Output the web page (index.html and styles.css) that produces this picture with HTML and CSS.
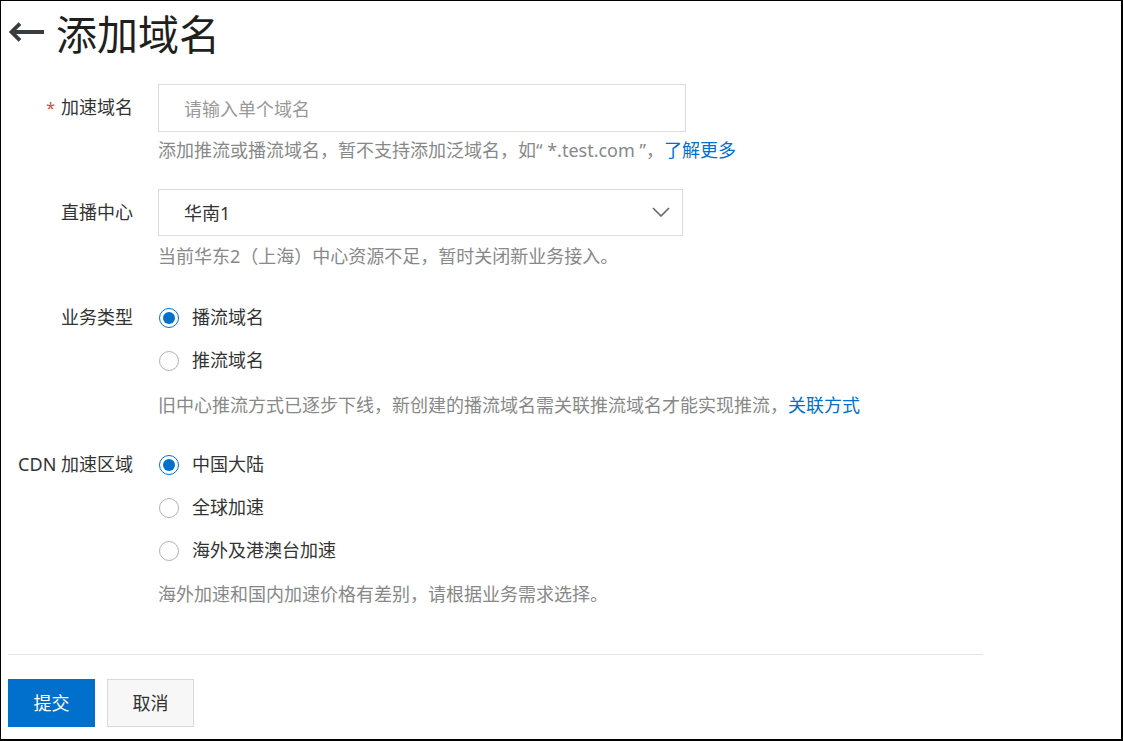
FILE: index.html
```html
<!DOCTYPE html>
<html lang="zh-CN">
<head>
<meta charset="utf-8">
<title>添加域名</title>
<link rel="stylesheet" href="styles.css">
</head>
<body>
<div class="page">
  <header class="header">
    <svg class="back" width="37" height="20" viewBox="0 0 37 20" aria-hidden="true">
      <path d="M36 10H3.5 M12 1.6L3.5 10L12 18.4" fill="none" stroke="#373d41" stroke-width="3.8"/>
    </svg>
    <h1 class="title">添加域名</h1>
  </header>

  <div class="item item-input">
    <div class="label"><span class="star">*</span>加速域名</div>
    <div class="control">
      <div class="input"><span class="placeholder">请输入单个域名</span></div>
      <div class="help help-a">添加推流或播流域名，暂不支持添加泛域名，如“ *.test.com ”，<span class="link">了解更多</span></div>
    </div>
  </div>

  <div class="item item-select">
    <div class="label">直播中心</div>
    <div class="control">
      <div class="select">
        <span class="value">华南1</span>
        <svg class="chev" width="18" height="10" viewBox="0 0 18 10" aria-hidden="true">
          <path d="M1 1L9 9L17 1" fill="none" stroke="#666" stroke-width="1.6"/>
        </svg>
      </div>
      <div class="help help-b">当前华东2（上海）中心资源不足，暂时关闭新业务接入。</div>
    </div>
  </div>

  <div class="item item-radio">
    <div class="label label-radio">业务类型</div>
    <div class="control">
      <div class="radio-row"><span class="radio checked"></span><span class="radio-text">播流域名</span></div>
      <div class="radio-row"><span class="radio"></span><span class="radio-text">推流域名</span></div>
      <div class="help help-c">旧中心推流方式已逐步下线，新创建的播流域名需关联推流域名才能实现推流，<span class="link">关联方式</span></div>
    </div>
  </div>

  <div class="item item-radio last">
    <div class="label label-radio">CDN 加速区域</div>
    <div class="control">
      <div class="radio-row"><span class="radio checked"></span><span class="radio-text">中国大陆</span></div>
      <div class="radio-row"><span class="radio"></span><span class="radio-text">全球加速</span></div>
      <div class="radio-row"><span class="radio"></span><span class="radio-text">海外及港澳台加速</span></div>
      <div class="help help-d">海外加速和国内加速价格有差别，请根据业务需求选择。</div>
    </div>
  </div>

  <div class="divider"></div>

  <div class="actions">
    <button class="btn btn-primary">提交</button>
    <button class="btn btn-default">取消</button>
  </div>
</div>
</body>
</html>
```

FILE: styles.css
```css
* { box-sizing: border-box; }

html, body {
  margin: 0;
  padding: 0;
  background: #fff;
}

body {
  font-family: "Noto Sans", "Noto Sans CJK SC", sans-serif;
  color: #333;
}

.page {
  width: 1123px;
  height: 741px;
  border-style: solid;
  border-color: #000;
  border-width: 1px 2px 2px 1px;
  padding-left: 7px;
  overflow: hidden;
}

.header {
  height: 61px;
  display: flex;
  align-items: center;
  gap: 11px;
}

.back {
  display: block;
  flex: none;
}

.title {
  margin: 0;
  font-size: 41px;
  font-weight: 400;
  line-height: 50px;
  color: #1f1f1f;
  font-family: "Noto Sans CJK SC", sans-serif;
}

.item {
  display: grid;
  grid-template-columns: 125px 1fr;
  column-gap: 25px;
  margin-bottom: 27px;
}

.item-input { margin-top: 22px; }
.item-select { margin-bottom: 28px; }
.item-radio { margin-bottom: 26px; }
.item-radio.last { margin-bottom: 0; }

.label {
  text-align: right;
  font-size: 18px;
  line-height: 47px;
  color: #333;
  white-space: nowrap;
}

.label-radio { line-height: 42px; }

.star {
  color: #e2453c;
  font-size: 16px;
  margin-right: 6px;
}

.control {
  display: flex;
  flex-direction: column;
  align-items: flex-start;
}

.input {
  width: 528px;
  height: 48px;
  border: 1px solid #dcdcdc;
  padding-left: 25px;
  padding-bottom: 1px;
  display: flex;
  align-items: center;
  font-size: 18px;
}

.placeholder { color: #999; }

.select {
  width: 525px;
  height: 47px;
  border: 1px solid #dcdcdc;
  padding: 0 12px 1px 25px;
  display: flex;
  align-items: center;
  justify-content: space-between;
  font-size: 18px;
  color: #333;
}

.chev { display: block; }

.help {
  font-size: 18px;
  line-height: 24px;
  color: #888;
  white-space: nowrap;
}

.help-a { margin-top: 6px; }
.help-b { margin-top: 8px; }
.help-c { margin-top: 11px; }
.help-d { margin-top: 10px; }

.link { color: #0070cc; }

.radio-row {
  height: 43px;
  display: flex;
  align-items: center;
}

.radio {
  width: 20px;
  height: 20px;
  margin-left: 1px;
  border: 1px solid #b3b3b3;
  border-radius: 50%;
  background: #fff;
  position: relative;
  flex: none;
}

.radio.checked {
  border-color: #0070cc;
}

.radio.checked::after {
  content: "";
  position: absolute;
  left: 3px;
  top: 3px;
  width: 12px;
  height: 12px;
  border-radius: 50%;
  background: #0070cc;
}

.radio-text {
  margin-left: 13px;
  font-size: 18px;
  line-height: 24px;
  color: #333;
  position: relative;
  top: -1px;
}

.divider {
  width: 975px;
  height: 1px;
  background: #e3e3e3;
  margin-top: 48px;
}

.actions {
  margin-top: 24px;
  display: flex;
  gap: 12px;
}

.btn {
  width: 87px;
  height: 48px;
  font-family: "Noto Sans CJK SC", sans-serif;
  font-size: 18px;
  padding: 0 0 2px 0;
  cursor: pointer;
}

.btn-primary {
  background: #0070cc;
  color: #fff;
  border: none;
}

.btn-default {
  background: #f7f7f7;
  color: #333;
  border: 1px solid #d9d9d9;
}
```
